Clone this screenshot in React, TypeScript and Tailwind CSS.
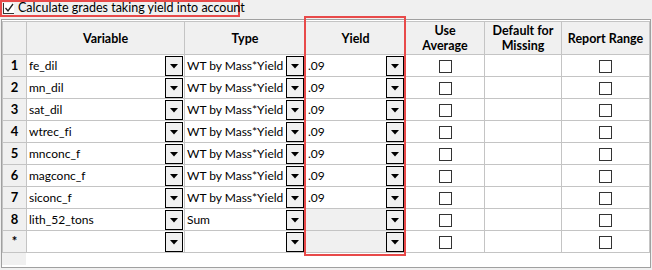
import React from "react";

const rows = [
  { n: "1", variable: "fe_dil", type: "WT by Mass*Yield", yield: ".09" },
  { n: "2", variable: "mn_dil", type: "WT by Mass*Yield", yield: ".09" },
  { n: "3", variable: "sat_dil", type: "WT by Mass*Yield", yield: ".09" },
  { n: "4", variable: "wtrec_fi", type: "WT by Mass*Yield", yield: ".09" },
  { n: "5", variable: "mnconc_f", type: "WT by Mass*Yield", yield: ".09" },
  { n: "6", variable: "magconc_f", type: "WT by Mass*Yield", yield: ".09" },
  { n: "7", variable: "siconc_f", type: "WT by Mass*Yield", yield: ".09" },
  { n: "8", variable: "lith_52_tons", type: "Sum", yield: null },
  { n: "*", variable: "", type: "", yield: null },
];

function DropButton() {
  return (
    <span className="absolute right-[1px] top-[1px] flex h-[20px] w-[18px] items-center justify-center border border-black bg-[#f0f0f0]">
      <svg width="8" height="5" viewBox="0 0 8 5">
        <path d="M0 0 H8 L4 4.5 Z" fill="#000" />
      </svg>
    </span>
  );
}

function Box() {
  return <span className="inline-block h-[13px] w-[13px] border border-[#333] bg-white align-middle" />;
}

export default function App() {
  return (
    <div
      className="relative h-[270px] w-[652px] bg-[#f0f0f0] text-[12px] text-black [font-variant-ligatures:none]"
      style={{ fontFamily: 'Lato, "Liberation Sans", sans-serif' }}
    >
      {/* checkbox */}
      <div className="flex h-[17px] w-[240px] items-center gap-[4px] whitespace-nowrap border-2 border-[#e84a4a] pl-[1px]">
        <span className="flex h-[11px] w-[11px] shrink-0 items-center justify-center border-b border-l border-[#333] bg-white">
          <svg width="10" height="10" viewBox="0 0 10 10">
            <path d="M1.5 5 L4 8 L9 1" stroke="#222" strokeWidth="1.3" fill="none" />
          </svg>
        </span>
        <span className="text-[12.5px] leading-none">Calculate grades taking yield into account</span>
      </div>

      {/* grid */}
      <div className="mx-[1px] mt-[2px] h-[249px] border border-[#a0a0a0] bg-white pt-[1px]">
        <table className="w-[647px] table-fixed border-collapse">
          <colgroup>
            <col className="w-[24px]" />
            <col className="w-[158px]" />
            <col className="w-[121px]" />
            <col className="w-[100px]" />
            <col className="w-[79px]" />
            <col className="w-[77px]" />
            <col className="w-[88px]" />
          </colgroup>
          <thead>
            <tr className="h-[33px] bg-[#f0f0f0] text-center text-[12.5px] font-bold leading-[15px]">
              <th className="border border-[#c4c4c4]" />
              <th className="border border-[#c4c4c4]">Variable</th>
              <th className="border border-[#c4c4c4]">Type</th>
              <th className="border border-[#c4c4c4]">Yield</th>
              <th className="border border-[#c4c4c4]">Use<br />Average</th>
              <th className="border border-[#c4c4c4]">Default for<br />Missing</th>
              <th className="whitespace-nowrap border border-[#c4c4c4]">Report Range</th>
            </tr>
          </thead>
          <tbody>
            {rows.map((r) => (
              <tr key={r.n} className="h-[22px] text-[12px]">
                <td className="border border-[#c4c4c4] bg-[#f0f0f0] text-center text-[13px] font-bold">{r.n}</td>
                <td className="relative border border-[#c4c4c4] pl-[2px]">
                  {r.variable}
                  <DropButton />
                </td>
                <td className="relative whitespace-nowrap border border-[#c4c4c4] pl-[2px]">
                  {r.type}
                  <DropButton />
                </td>
                <td className={`relative border border-[#c4c4c4] pl-[2px] ${r.yield ? "" : "bg-[#f0f0f0]"}`}>
                  {r.yield}
                  <DropButton />
                </td>
                <td className="border border-[#c4c4c4] text-center">
                  <Box />
                </td>
                <td className="border border-[#c4c4c4]" />
                <td className="border border-[#c4c4c4] text-center">
                  <Box />
                </td>
              </tr>
            ))}
          </tbody>
        </table>
        <div className="h-[12px] w-[24px] bg-[#f0f0f0]" />
      </div>

      {/* yield highlight */}
      <div className="pointer-events-none absolute left-[304px] top-[16px] h-[240px] w-[102px] border-2 border-[#e84a4a]" />
    </div>
  );
}
